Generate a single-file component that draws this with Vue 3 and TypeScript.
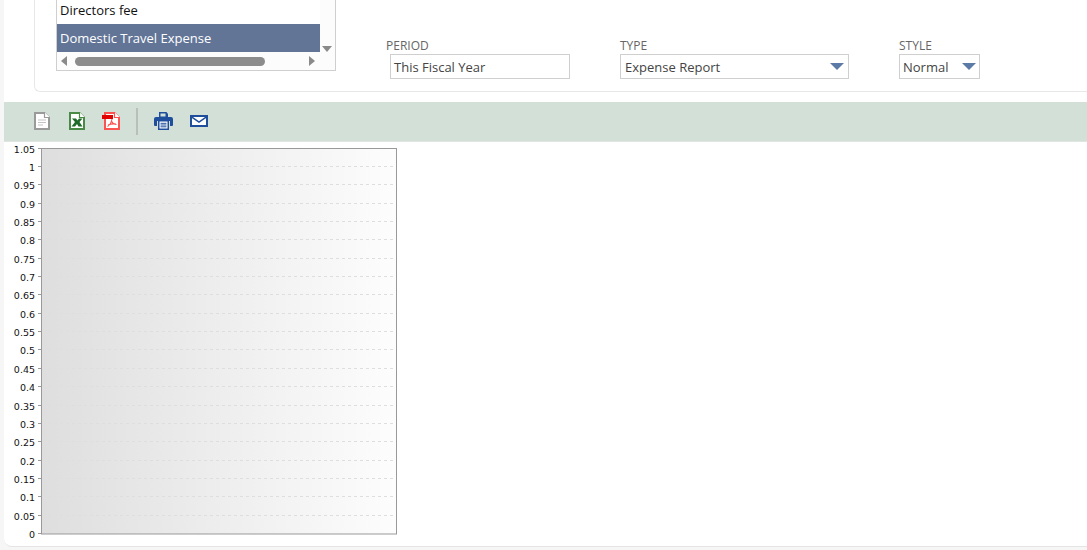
<script setup lang="ts">
const ticks: string[] = ['1.05','1','0.95','0.9','0.85','0.8','0.75','0.7','0.65','0.6','0.55','0.5','0.45','0.4','0.35','0.3','0.25','0.2','0.15','0.1','0.05','0']
const top = 148.5
const step = 385.5 / 21
const tickY = (i: number): number => top + i * step
</script>

<template>
  <div class="page">
    <main class="panel">
      <section class="filters">
        <div class="listbox">
          <div class="list-body">
            <div class="rows">
              <div class="row">Directors fee</div>
              <div class="row selected">Domestic Travel Expense</div>
            </div>
            <div class="vscroll"><span class="arrow-down grey"></span></div>
          </div>
          <div class="hscroll">
            <span class="arrow-left"></span>
            <span class="thumb"></span>
            <span class="arrow-right"></span>
          </div>
        </div>
        <div class="field period">
          <label>PERIOD</label>
          <div class="input">This Fiscal Year</div>
        </div>
        <div class="field type">
          <label>TYPE</label>
          <div class="input select">Expense Report<span class="arrow-down blue"></span></div>
        </div>
        <div class="field style">
          <label>STYLE</label>
          <div class="input select">Normal<span class="arrow-down blue"></span></div>
        </div>
      </section>

      <nav class="toolbar">
        <svg class="ic doc" width="16" height="18" viewBox="0 0 16 18">
          <path d="M1 1h9.500L15 5.500V17H1z" fill="#fff" stroke="#9a9a9a" stroke-width="2"/>
          <path d="M10.500 0v5.500H16" fill="#fff" stroke="#9a9a9a" stroke-width="1.200"/>
          <path d="M4 8h8M4 10.500h8M4 13h5" stroke="#c4c4c4" stroke-width="1.200"/>
        </svg>
        <svg class="ic xls" width="16" height="18" viewBox="0 0 16 18">
          <path d="M1 1h9.500L15 5.500V17H1z" fill="#fff" stroke="#4a8a47" stroke-width="2"/>
          <path d="M10.500 0v5.500H16" fill="#fff" stroke="#4a8a47" stroke-width="1.200"/>
          <path d="M3 6.500h4l1.500 2 1.500-2h3.500L10.500 10l3 4.500H9.500L8 12l-2 2.500H2.500L6 10z" fill="#1f6b2a"/>
        </svg>
        <svg class="ic pdf" width="18" height="18" viewBox="0 0 18 18">
          <path d="M3 1h9.500L17 5.500V17H3z" fill="#fff" stroke="#fb5252" stroke-width="2"/>
          <path d="M12.500 0v5.500H18" fill="#fff" stroke="#fb5252" stroke-width="1.200"/>
          <path d="M10 7c-.5 3-2 6-4.500 7.500M9.500 9c1 2 3 3.500 5 3.500M6 13c2-.8 5-1.300 8-1" fill="none" stroke="#fb5252" stroke-width="1.100"/>
          <rect x="0" y="3" width="11" height="4" fill="#e00000"/>
        </svg>
        <span class="divider"></span>
        <svg class="ic printer" width="19" height="18" viewBox="0 0 19 18">
          <path d="M5 0h7.500L14 2v4H5z" fill="#1f4f9c"/>
          <path d="M6.500 1.500h5V4.500h-5z" fill="#d2e0d7"/>
          <path d="M2 5h15a2 2 0 0 1 2 2v6a1 1 0 0 1-1 1h-2V9H3v5H1a1 1 0 0 1-1-1V7a2 2 0 0 1 2-2z" fill="#1f4f9c"/>
          <rect x="4" y="8" width="11" height="10" fill="#1f4f9c"/>
          <rect x="5.500" y="9.500" width="8" height="7" fill="#fff"/>
          <path d="M6.500 11.300h6M6.500 13h6M6.500 14.800h6" stroke="#1f4f9c" stroke-width="1"/>
        </svg>
        <svg class="ic mail" width="18" height="12" viewBox="0 0 18 12">
          <rect x="0" y="0" width="18" height="12" fill="#1f4f9c"/>
          <rect x="2" y="2" width="14" height="8" fill="#fff"/>
          <path d="M1.500 1.800L9 7l7.500-5.200" fill="none" stroke="#1f4f9c" stroke-width="1.500"/>
        </svg>
      </nav>

      <svg class="chart" width="1083" height="405" viewBox="0 0 1083 405" aria-label="Expense chart">
        <defs>
          <linearGradient id="plotFill" x1="0" y1="0" x2="1" y2="0">
            <stop offset="0" stop-color="#dedede"/>
            <stop offset="1" stop-color="#fdfdfd"/>
          </linearGradient>
        </defs>
        <g transform="translate(-4,-142)">
          <rect x="41.500" y="148.500" width="355" height="385.500" fill="url(#plotFill)" stroke="#999" stroke-width="1"/>
          <g v-for="(t, i) in ticks" :key="t">
            <line v-if="i > 0 && i < 21" x1="42" x2="396" :y1="Math.round(tickY(i)) - 0.5" :y2="Math.round(tickY(i)) - 0.5" stroke="#dedede" stroke-width="1" stroke-dasharray="3 3"/>
            <line x1="38" x2="41" :y1="Math.round(tickY(i)) - 0.5" :y2="Math.round(tickY(i)) - 0.5" stroke="#999" stroke-width="1"/>
            <text x="35" :y="Math.round(tickY(i)) + 3" text-anchor="end" class="tick">{{ t }}</text>
          </g>
        </g>
      </svg>
    </main>
  </div>
</template>

<style scoped>
.page {
  width: 1087px;
  height: 550px;
  overflow: hidden;
  background: #f6f6f6;
  font-family: "Open Sans", "Liberation Sans", sans-serif;
  font-size: 13px;
  color: #333;
}
.panel {
  margin-left: 4px;
  height: 547px;
  background: #fff;
  border-bottom: 1px solid #e4e4e4;
  border-bottom-left-radius: 8px;
  box-sizing: border-box;
  overflow: hidden;
}
.filters {
  box-sizing: border-box;
  height: 92px;
  margin-left: 30px;
  margin-right: -10px;
  padding-left: 21px;
  border-left: 1px solid #e8e8e8;
  border-bottom: 1px solid #e8e8e8;
  border-bottom-left-radius: 6px;
  display: flex;
  align-items: flex-start;
}
.listbox {
  width: 280px;
  height: 71px;
  box-sizing: border-box;
  border: 1px solid #cfcfcf;
  border-top: none;
  background: #fff;
  flex: none;
}
.list-body {
  display: flex;
  height: 52px;
}
.rows {
  width: 263px;
}
.row {
  height: 24px;
  line-height: 21px;
  padding-left: 3px;
  color: #111;
}
.row.selected {
  height: 28px;
  line-height: 28px;
  background: #627597;
  color: #fff;
}
.vscroll {
  flex: 1;
  background: #fcfcfc;
  position: relative;
}
.arrow-down {
  display: block;
  width: 0;
  height: 0;
  border-left: 5px solid transparent;
  border-right: 5px solid transparent;
  border-top: 6px solid #888;
}
.arrow-down.grey {
  position: absolute;
  left: 2px;
  bottom: 0;
  border-top-color: #8a8a8a;
}
.arrow-down.blue {
  border-left-width: 7px;
  border-right-width: 7px;
  border-top: 7px solid #5b7aa5;
}
.hscroll {
  height: 18px;
  background: #fcfcfc;
  display: flex;
  align-items: center;
  padding: 0 20px 0 4px;
}
.thumb {
  width: 190px;
  height: 9px;
  border-radius: 5px;
  background: #8c8c8c;
  margin: 0 44px 0 8px;
}
.arrow-left,
.arrow-right {
  width: 0;
  height: 0;
  border-top: 5px solid transparent;
  border-bottom: 5px solid transparent;
}
.arrow-left {
  border-right: 6px solid #8a8a8a;
}
.arrow-right {
  border-left: 6px solid #8a8a8a;
}
.field {
  padding-top: 38px;
  flex: none;
}
.field label {
  display: block;
  height: 16px;
  line-height: 15px;
  font-size: 12px;
  color: #666;
}
.input {
  box-sizing: border-box;
  height: 25px;
  line-height: 24px;
  border: 1px solid #cfcfcf;
  padding-left: 3px;
  color: #444;
  background: #fff;
}
.select {
  display: flex;
  align-items: center;
  justify-content: space-between;
  padding-right: 3px;
}
.period {
  margin-left: 50px;
  width: 184px;
}
.period .input {
  width: 180px;
  margin-left: 4px;
}
.type {
  margin-left: 50px;
  width: 229px;
}
.type .select {
  padding-left: 4px;
  padding-right: 4px;
}
.style {
  margin-left: 50px;
  width: 81px;
}
.toolbar {
  box-sizing: border-box;
  height: 40px;
  margin-top: 10px;
  padding-bottom: 1px;
  background: #d2e0d7;
  border-bottom: 1px solid #dfe5e1;
  display: flex;
  align-items: center;
  position: relative;
}
.ic {
  display: block;
  flex: none;
}
.doc { margin-left: 30px; }
.xls { margin-left: 19px; }
.pdf { margin-left: 17px; }
.divider {
  width: 2px;
  height: 27px;
  background: #b9bfbb;
  margin-left: 16px;
  flex: none;
}
.printer { margin-left: 16px; }
.mail { margin-left: 17px; }
.chart {
  display: block;
  margin-top: 0;
}
.tick {
  font-family: "DejaVu Sans", sans-serif;
  font-size: 9.500px;
  fill: #111;
  transform: translateY(1px);
}
</style>
